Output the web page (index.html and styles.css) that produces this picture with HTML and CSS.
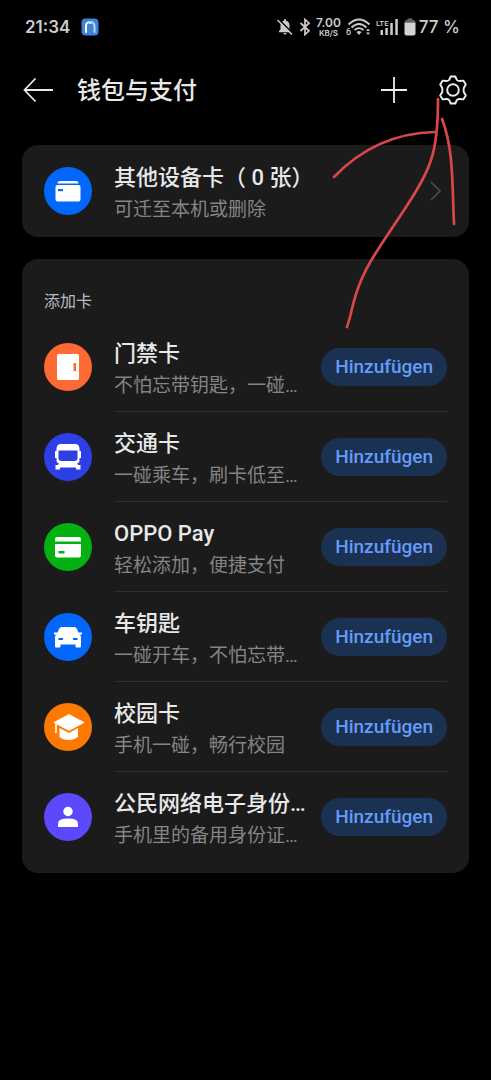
FILE: index.html
```html
<!DOCTYPE html>
<html lang="zh-CN">
<head>
<meta charset="utf-8">
<meta name="viewport" content="width=device-width, initial-scale=1">
<title>钱包与支付</title>
<link rel="stylesheet" href="styles.css">
</head>
<body>
<div class="screen">
  <div class="status">
    <span class="clock">21:34</span>
    <svg class="app-badge" width="18" height="18" viewBox="0 0 18 18" aria-hidden="true">
      <rect x="0.5" y="0.5" width="17" height="17" rx="4" fill="#3f83d8"/>
      <path d="M5 14V7.500C5 4.500 8 3.500 9.500 5" fill="none" stroke="#fff" stroke-width="2" stroke-linecap="round"/>
      <path d="M8.500 4.300C11.500 3.500 13.500 5.500 13.500 8V14" fill="none" stroke="#b9d6fa" stroke-width="2" stroke-linecap="round"/>
    </svg>
    <div class="indicators">
      <svg width="18" height="18" viewBox="0 0 18 18" aria-hidden="true">
        <path d="M3 14.200V13L4.500 11.500V7.500C4.500 4.800 6 3.200 8 2.700V2A1 1 0 0 1 10 2V2.700C12.200 3.200 13.500 4.800 13.500 7.500V11.500L15 13V14.200ZM7.500 15H10.500A1.500 1.500 0 0 1 7.500 15Z" fill="#ccc"/>
        <path d="M3.200 1.800L17 15.600" stroke="#000" stroke-width="1.500"/>
        <path d="M1.500 2L16 16.500" stroke="#ccc" stroke-width="1.500"/>
      </svg>
      <svg width="12" height="18" viewBox="0 0 12 18" aria-hidden="true">
        <path d="M1.500 5L10 12.800L6 16.500V1.500L10 5.200L1.500 13" fill="none" stroke="#ccc" stroke-width="1.700"/>
      </svg>
      <span class="speed"><b>7.00</b><small>KB/S</small></span>
      <svg width="25" height="18" viewBox="0 0 25 18" aria-hidden="true">
        <g fill="none" stroke="#ccc" stroke-width="1.800">
          <path d="M2.500 6.500Q13 -3.500 23.500 6.500"/>
          <path d="M5.500 9.500Q13 2.500 20.500 9.500"/>
          <path d="M8.500 12Q13 8.200 17.500 12"/>
        </g>
        <path d="M10.500 14Q13 12 15.500 14L13 17Z" fill="#ccc"/>
        <path d="M20 13L22 10.500L24 13ZM20 14.500H24L22 17Z" fill="#ccc"/>
        <text class="wifi-gen" x="0" y="17">6</text>
      </svg>
      <svg width="23" height="18" viewBox="0 0 23 18" aria-hidden="true">
        <text class="lte" x="0" y="8">LTE</text>
        <path d="M4.500 12H7V17H4.500ZM9.300 10H11.800V17H9.300ZM14.300 5H16.800V17H14.300ZM19.300 1H21.800V17H19.300Z" fill="#ccc"/>
      </svg>
      <span class="battery">
        <svg width="12" height="18" viewBox="0 0 12 18" aria-hidden="true">
          <path d="M3.500 0.500H8.500V2H9.500Q11.500 2 11.500 4.500H0.500Q0.500 2 2.500 2H3.500Z" fill="#666"/>
          <path d="M0.500 4.500H11.500V15.500Q11.500 17.500 9.500 17.500H2.500Q0.500 17.500 0.500 15.500Z" fill="#d4d4d4"/>
        </svg>
        <span>77 %</span>
      </span>
    </div>
  </div>

  <header class="topbar">
    <button class="icon-button" type="button" aria-label="返回">
      <svg width="30" height="30" viewBox="0 0 30 30"><path d="M12.500 3.500L1.500 15L12.500 26.500M1.500 15H30" fill="none" stroke="#e8e8e8" stroke-width="1.800"/></svg>
    </button>
    <h1 class="page-title">钱包与支付</h1>
    <button class="icon-button" type="button" aria-label="添加">
      <svg width="30" height="30" viewBox="0 0 30 30"><path d="M15 2V28M2 15H28" stroke="#eee" stroke-width="1.800"/></svg>
    </button>
    <button class="icon-button" type="button" aria-label="设置">
      <svg width="30" height="30" viewBox="0 0 30 30" fill="none" stroke="#eee" stroke-width="1.900" stroke-linejoin="round">
        <path d="M12.700 1.500H17.300L18.800 4.900Q20.200 6.100 21.500 6L25.300 5.600L27.800 9.500L25.900 12.800Q25.200 15 25.900 17.200L27.800 20.500L25.300 24.400L21.500 24Q20.200 23.900 18.800 25.100L17.300 28.500H12.700L11.200 25.100Q9.800 23.900 8.500 24L4.700 24.400L2.200 20.500L4.100 17.200Q4.800 15 4.100 12.800L2.200 9.500L4.700 5.600L8.500 6Q9.800 6.100 11.200 4.900Z"/>
        <circle cx="15" cy="15" r="5.800"/>
      </svg>
    </button>
  </header>

  <main class="content">
    <a class="card device-card" href="#devices">
      <svg class="disc" width="48" height="48" viewBox="0 0 48 48" aria-hidden="true">
        <circle cx="24" cy="24" r="24" fill="#0268fb"/>
        <path d="M13.500 16.500Q13.500 14 16 14H32Q34.500 14 34.500 16.500Z" fill="#fff"/>
        <rect x="11.500" y="18" width="25" height="16.500" rx="2" fill="#fff"/>
        <rect x="14" y="22" width="5" height="2.200" fill="#0268fb"/>
      </svg>
      <span class="texts">
        <span class="name">其他设备卡（ 0 张）</span>
        <span class="note">可迁至本机或删除</span>
      </span>
      <svg class="chevron" width="22" height="22" viewBox="0 0 22 22" aria-hidden="true"><path d="M6 2L15 11L6 20" fill="none" stroke="#4c4c4c" stroke-width="1.600"/></svg>
    </a>

    <section class="card add-card">
      <h2 class="section-title">添加卡</h2>
      <ul class="list">
        <li class="row">
          <svg class="disc" width="48" height="48" viewBox="0 0 48 48" aria-hidden="true">
            <circle cx="24" cy="24" r="24" fill="#fd6a34"/>
            <rect x="13" y="11" width="22" height="26" rx="1.500" fill="#fff"/>
            <rect x="29.500" y="20" width="2.500" height="8" fill="#fd6a34"/>
          </svg>
          <div class="body">
            <div class="texts"><span class="name">门禁卡</span><span class="note">不怕忘带钥匙，一碰…</span></div>
            <button class="add" type="button">Hinzufügen</button>
          </div>
        </li>
        <li class="row">
          <svg class="disc" width="48" height="48" viewBox="0 0 48 48" aria-hidden="true">
            <circle cx="24" cy="24" r="24" fill="#2e3fe6"/>
            <path d="M17 11H31Q35 11 35.500 15V18H37V25H35.500V28Q35 30 33 30.500L34 32H36.500V36.500H32V34.500H16V36.500H11.500V32H14L15 30.500Q13 30 12.500 28V25H11V18H12.500V15Q13 11 17 11Z" fill="#fff"/>
            <path d="M14.500 17.500H33.500V25Q33.500 28 30.500 28H17.500Q14.500 28 14.500 25Z" fill="#2e3fe6"/>
          </svg>
          <div class="body">
            <div class="texts"><span class="name">交通卡</span><span class="note">一碰乘车，刷卡低至…</span></div>
            <button class="add" type="button">Hinzufügen</button>
          </div>
        </li>
        <li class="row">
          <svg class="disc" width="48" height="48" viewBox="0 0 48 48" aria-hidden="true">
            <circle cx="24" cy="24" r="24" fill="#03b210"/>
            <path d="M11 18.500V16Q11 14 13 14H35Q37 14 37 16V18.500ZM11 21H37V32.500Q37 34.500 35 34.500H13Q11 34.500 11 32.500Z" fill="#fff"/>
            <rect x="14.500" y="28" width="6" height="2.500" fill="#03b210"/>
          </svg>
          <div class="body">
            <div class="texts"><span class="name">OPPO Pay</span><span class="note">轻松添加，便捷支付</span></div>
            <button class="add" type="button">Hinzufügen</button>
          </div>
        </li>
        <li class="row">
          <svg class="disc" width="48" height="48" viewBox="0 0 48 48" aria-hidden="true">
            <circle cx="24" cy="24" r="24" fill="#0268fb"/>
            <path d="M17.500 14H30.500Q32 14 32.700 15.500L34.500 19.500H38V21.500H35.800Q37 22.500 37 24V33.500Q37 34.500 36 34.500H32.500Q31.500 34.500 31.500 33.500V31.500H16.500V33.500Q16.500 34.500 15.500 34.500H12Q11 34.500 11 33.500V24Q11 22.500 12.200 21.500H10V19.500H13.500L15.300 15.500Q16 14 17.500 14Z" fill="#fff"/>
            <path d="M14.500 25H19V27H14.500ZM29 25H33.500V27H29Z" fill="#0268fb"/>
          </svg>
          <div class="body">
            <div class="texts"><span class="name">车钥匙</span><span class="note">一碰开车，不怕忘带…</span></div>
            <button class="add" type="button">Hinzufügen</button>
          </div>
        </li>
        <li class="row">
          <svg class="disc" width="48" height="48" viewBox="0 0 48 48" aria-hidden="true">
            <circle cx="24" cy="24" r="24" fill="#fe7900"/>
            <path d="M25 11.500L40 19.500L25 27.500L10 19.500Z" fill="#fff" stroke="#fff" stroke-width="0.800" stroke-linejoin="round"/>
            <path d="M15.500 25L25 30L34 25V34Q30 37 24.500 37T15.500 34Z" fill="#fff"/>
            <path d="M12 21V30" stroke="#fff" stroke-width="1.600"/>
          </svg>
          <div class="body">
            <div class="texts"><span class="name">校园卡</span><span class="note">手机一碰，畅行校园</span></div>
            <button class="add" type="button">Hinzufügen</button>
          </div>
        </li>
        <li class="row">
          <svg class="disc" width="48" height="48" viewBox="0 0 48 48" aria-hidden="true">
            <circle cx="24" cy="24" r="24" fill="#5b49fb"/>
            <circle cx="24" cy="18.500" r="4.700" fill="#fff"/>
            <path d="M14 34V30.500Q14 25.500 24 25.500T34 30.500V34Z" fill="#fff"/>
          </svg>
          <div class="body">
            <div class="texts"><span class="name">公民网络电子身份…</span><span class="note">手机里的备用身份证…</span></div>
            <button class="add" type="button">Hinzufügen</button>
          </div>
        </li>
      </ul>
    </section>
  </main>

  <svg class="scribble" width="171" height="340" viewBox="0 0 171 340" aria-hidden="true">
    <g fill="none" stroke="#d9474b" stroke-width="2.700" stroke-linecap="round">
      <path d="M118 99C118 122 117 143 111 160C103 186 75 222 57 251C40 277 35 295 30 317Q28 324 27 327"/>
      <path d="M14 177C38 152 70 133 115 132"/>
      <path d="M122 119C134 150 132 185 134 224"/>
    </g>
  </svg>
</div>
</body>
</html>
```

FILE: styles.css
```css
* {
  box-sizing: border-box;
}

body {
  margin: 0;
  background: #000;
  color: #e8e8e8;
  font-family: Roboto, "Noto Sans CJK SC", sans-serif;
}

.screen {
  position: relative;
  min-height: 100vh;
}

.status {
  display: flex;
  align-items: center;
  gap: 11px;
  height: 54px;
  padding: 0 31px 0 25px;
  color: #ccc;
  font-family: Inter, Roboto, sans-serif;
}

.clock {
  font-size: 17px;
  font-weight: 600;
}

.indicators {
  display: flex;
  align-items: center;
  gap: 5px;
  margin-left: auto;
  white-space: nowrap;
}

.indicators svg {
  flex: none;
}

.speed {
  display: flex;
  flex-direction: column;
  align-items: center;
}

.speed b {
  font-size: 12px;
  font-weight: 600;
  line-height: 12px;
}

.speed small {
  font-size: 8px;
  font-weight: 600;
  line-height: 8px;
}

.wifi-gen,
.lte {
  fill: #ccc;
  font-family: Roboto, sans-serif;
  font-size: 9px;
  font-weight: 500;
}

.lte {
  font-size: 8px;
}

.battery {
  display: flex;
  align-items: center;
  gap: 3px;
  font-size: 17px;
  font-weight: 500;
}

.topbar {
  display: flex;
  align-items: center;
  height: 72px;
  padding: 0 23px;
}

.icon-button {
  display: flex;
  padding: 0;
  border: 0;
  background: none;
}

.icon-button + .icon-button {
  margin-left: 29px;
}

.page-title {
  flex: 1;
  margin: 0 0 0 24px;
  padding-top: 2px;
  font-size: 24px;
  font-weight: 500;
  line-height: 36px;
}

.content {
  display: flex;
  flex-direction: column;
  gap: 22px;
  padding: 19px 22px;
}

.card {
  border-radius: 16px;
  background: #1b1b1b;
}

.device-card {
  display: flex;
  align-items: center;
  gap: 22px;
  padding: 11px 22px;
  color: inherit;
  text-decoration: none;
}

.disc {
  flex: none;
}

.texts {
  display: flex;
  flex: 1;
  flex-direction: column;
  min-width: 0;
  padding-top: 6px;
  white-space: nowrap;
}

.name {
  font-size: 22px;
  font-weight: 500;
  line-height: 32px;
}

.note {
  color: #848484;
  font-size: 19px;
  font-weight: 400;
  line-height: 32px;
}

.add-card {
  padding: 31px 22px 11px;
}

.section-title {
  margin: 0 0 8px;
  color: #b8bbc4;
  font-size: 16px;
  font-weight: 400;
  line-height: 24px;
}

.list {
  margin: 0;
  padding: 0;
  list-style: none;
}

.row {
  display: flex;
  align-items: center;
  gap: 22px;
}

.body {
  display: flex;
  flex: 1;
  align-items: center;
  gap: 12px;
  min-width: 0;
  height: 90px;
  border-bottom: 1px solid #2e2e2e;
}

.row:last-child .body {
  border-bottom-color: transparent;
}

.add {
  flex: none;
  height: 38px;
  padding: 0 14px;
  border: 0;
  border-radius: 19px;
  background: #1b3151;
  color: #659bf8;
  font-family: Roboto, sans-serif;
  font-size: 19px;
  font-weight: 500;
}

.scribble {
  position: absolute;
  top: 0;
  right: 0;
  pointer-events: none;
}
```
